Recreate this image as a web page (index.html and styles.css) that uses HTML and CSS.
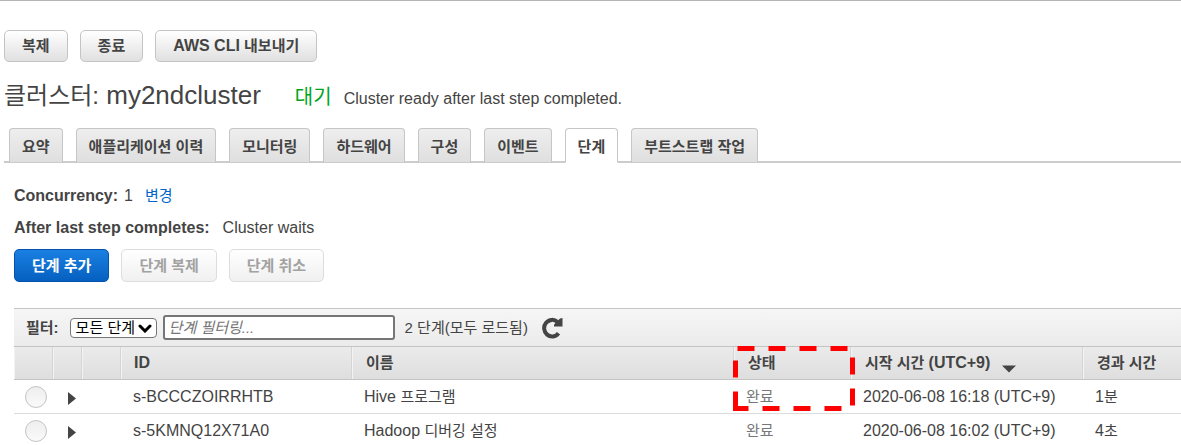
FILE: index.html
```
<!DOCTYPE html>
<html lang="ko">
<head>
<meta charset="utf-8">
<title>클러스터: my2ndcluster</title>
<link rel="stylesheet" href="styles.css">
</head>
<body>
<main class="page">
  <div class="actions">
    <button class="btn" type="button">복제</button>
    <button class="btn" type="button">종료</button>
    <button class="btn" type="button"><span class="latin">AWS CLI</span> 내보내기</button>
  </div>

  <header class="heading">
    <h1 class="title"><span class="title-label">클러스터:</span> my2ndcluster</h1>
    <span class="state">대기</span>
    <span class="state-note">Cluster ready after last step completed.</span>
  </header>

  <nav class="tabs">
    <button class="tab" type="button">요약</button>
    <button class="tab" type="button">애플리케이션 이력</button>
    <button class="tab" type="button">모니터링</button>
    <button class="tab" type="button">하드웨어</button>
    <button class="tab" type="button">구성</button>
    <button class="tab" type="button">이벤트</button>
    <button class="tab tab-active" type="button">단계</button>
    <button class="tab" type="button">부트스트랩 작업</button>
  </nav>

  <section class="panel">
    <div class="setting"><strong>Concurrency:</strong><span>1</span><a class="link ko" href="#">변경</a></div>
    <div class="setting setting-wide"><strong>After last step completes:</strong><span>Cluster waits</span></div>
    <div class="step-actions">
      <button class="btn btn-primary" type="button">단계 추가</button>
      <button class="btn" type="button" disabled>단계 복제</button>
      <button class="btn" type="button" disabled>단계 취소</button>
    </div>

    <div class="steps">
      <div class="filter">
        <label class="filter-label" for="kind">필터:</label>
        <span class="select-wrap">
          <select class="select" id="kind"><option>모든 단계</option></select>
          <svg class="chevron" width="14" height="9" viewBox="0 0 14 9"><path d="M2 2l5 5 5-5" fill="none" stroke="#000" stroke-width="3" stroke-linecap="round"/></svg>
        </span>
        <input class="search" type="text" placeholder="단계 필터링..." aria-label="단계 필터링">
        <span class="count">2 단계(모두 로드됨)</span>
        <button class="refresh" type="button" aria-label="새로 고침">
          <svg width="22" height="22" viewBox="0 0 22 22"><path d="M16.500 16.200A8 8.300 0 1 1 15.500 5" fill="none" stroke="#444" stroke-width="4"/><path d="M20.500 1v8.500h-8.500v-2l6-6z" fill="#444"/></svg>
        </button>
      </div>
      <div class="table-wrap">
        <table class="table">
          <colgroup>
            <col class="c-pick"><col class="c-open"><col class="c-gap"><col class="c-id"><col class="c-name"><col class="c-state"><col class="c-start"><col>
          </colgroup>
          <thead>
            <tr><th></th><th></th><th></th><th class="latin">ID</th><th>이름</th><th>상태</th><th><span class="sort"><span>시작 시간 <span class="latin">(UTC+9)</span></span><svg width="14" height="8" viewBox="0 0 14 8"><path d="M0 0.500h14l-7 7z" fill="#444"/></svg></span></th><th>경과 시간</th></tr>
          </thead>
          <tbody>
            <tr>
              <td class="pick"><input class="radio" type="radio" name="step" aria-label="s-BCCCZOIRRHTB"></td>
              <td><button class="open" type="button" aria-label="펼치기"><svg width="8" height="13" viewBox="0 0 8 13"><path d="M0 0l8 6.500-8 6.500z" fill="#444"/></svg></button></td>
              <td></td><td>s-BCCCZOIRRHTB</td><td>Hive <span class="ko">프로그램</span></td><td class="done ko">완료</td><td>2020-06-08 16:18 (UTC+9)</td><td>1<span class="ko">분</span></td>
            </tr>
            <tr>
              <td class="pick"><input class="radio" type="radio" name="step" aria-label="s-5KMNQ12X71A0"></td>
              <td><button class="open" type="button" aria-label="펼치기"><svg width="8" height="13" viewBox="0 0 8 13"><path d="M0 0l8 6.500-8 6.500z" fill="#444"/></svg></button></td>
              <td></td><td>s-5KMNQ12X71A0</td><td>Hadoop <span class="ko">디버깅 설정</span></td><td class="done ko">완료</td><td>2020-06-08 16:02 (UTC+9)</td><td>4<span class="ko">초</span></td>
            </tr>
          </tbody>
        </table>
        <svg class="marker" width="122" height="66" viewBox="0 0 122 66"><path d="M2.500 62.500v-60h117v60z" fill="none" stroke="#f00" stroke-width="5" stroke-dasharray="17 14"/></svg>
      </div>
    </div>
  </section>
</main>
</body>
</html>
```
FILE: styles.css
```
* { box-sizing: border-box; }
body {
  margin: 0;
  background: #fff;
  color: #444;
  font: 16px/20px "Liberation Sans", "Noto Sans CJK KR", sans-serif;
  overflow-x: hidden;
}
button, input, select { font: inherit; color: inherit; }
.page { border-top: 1px solid #b5b5b5; padding-top: 29px; }
.ko { font-size: 15px; }
.latin { font-size: 16px; }

.actions { display: flex; gap: 12px; padding-left: 4px; }
.btn {
  height: 32px;
  padding: 0 16px;
  border: 1px solid #c4c4c4;
  border-radius: 5px;
  background: linear-gradient(#fff, #e0e0e0);
  font-size: 15px;
  font-weight: bold;
  white-space: nowrap;
}
.btn:disabled { border-color: #ddd; background: linear-gradient(#fff, #f0f0f0); color: #a2a2a2; }
.btn-primary { border-color: #0552ad; background: linear-gradient(#1a80e2, #0560c0); color: #fff; }
.actions .btn, .step-actions .btn { padding: 0 17px; }

.heading { display: flex; align-items: baseline; height: 50px; padding: 17px 4px 0; white-space: nowrap; }
.title { margin: 0 34px 0 0; font-size: 26px; line-height: 32px; font-weight: normal; }
.title-label { font-size: 24px; }
.state { margin-right: 12px; color: #00a51c; font-size: 20px; }

.tabs { display: flex; gap: 13px; margin-left: 4px; padding: 16px 5px 0; border-bottom: 2px solid #ccc; }
.tab {
  height: 35px;
  margin-bottom: -2px;
  padding: 2px 12px 0;
  border: 1px solid #c6c6c6;
  border-bottom-color: #ccc;
  border-radius: 4px 4px 0 0;
  background: linear-gradient(#eee, #dfdfdf);
  font-size: 15px;
  font-weight: bold;
  white-space: nowrap;
}
.tab-active { border-bottom-color: #fff; background: #fff; }

.panel { padding: 23px 0 0 14px; }
.setting { display: flex; gap: 6px; height: 32px; align-items: baseline; }
.setting-wide { gap: 13px; height: 31px; }
.link { margin-left: 6px; color: #0066cc; text-decoration: none; }
.step-actions { display: flex; gap: 12px; }
.step-actions .btn { height: 33px; }

.steps { margin-top: 26px; border-top: 1px solid #c4c4c4; }
.filter {
  display: flex;
  align-items: center;
  height: 37px;
  padding-left: 12px;
  background: linear-gradient(#f6f6f6, #ebebeb);
  font-size: 15px;
}
.filter-label { margin-right: 11px; font-weight: bold; }
.select-wrap { position: relative; margin-right: 6px; }
.select {
  display: block;
  width: 87px;
  height: 20px;
  padding: 0 5px;
  border: 1px solid #767676;
  border-radius: 4px;
  background: #fff;
  color: #000;
  line-height: 18px;
  appearance: none;
}
.chevron { position: absolute; right: 5px; top: 6px; pointer-events: none; }
.search { width: 232px; height: 25px; margin-right: 10px; padding: 0 4px; border: 2px solid #767676; border-radius: 3px; background: #fff; }
.search::placeholder { color: #757575; font-style: italic; }
.refresh { display: flex; margin-left: 14px; padding: 0; border: 0; background: none; }

.table-wrap { position: relative; }
.table { width: 100%; table-layout: fixed; border-collapse: separate; border-spacing: 0; }
.c-pick { width: 39px; }
.c-open { width: 29px; }
.c-gap { width: 39px; }
.c-id { width: 231px; }
.c-name { width: 382px; }
.c-state { width: 117px; }
.c-start { width: 232px; }
.table th {
  height: 34px;
  padding: 0 0 0 14px;
  border: 0 solid #c4c4c4;
  border-width: 1px 0;
  background: linear-gradient(#ebebeb, #dedede);
  box-shadow: inset 1px 0 #f3f3f3, inset -1px 0 #d5d5d5;
  font-size: 15px;
  text-align: left;
  white-space: nowrap;
}
.table th.latin { font-size: 16px; padding-left: 13px; }
.table th:last-child { box-shadow: inset 1px 0 #f3f3f3; }
.table td { height: 34px; padding: 0 0 0 12px; border-bottom: 1px solid #ddd; white-space: nowrap; }
.table .pick { padding-left: 11px; }
.table .done { color: #777; }
.sort { display: flex; align-items: center; gap: 12px; }
.sort svg { margin-top: 12px; }
.radio {
  display: block;
  width: 22px;
  height: 22px;
  margin: 0;
  border: 1px solid #c4c4c4;
  border-radius: 50%;
  background: linear-gradient(#eee, #fafafa);
  appearance: none;
}
.open { display: flex; margin: 3px 0 0 3px; padding: 0; border: 0; background: none; }
.marker { position: absolute; left: 719px; top: 0; pointer-events: none; }
@media (max-height: 460px) {
  body { height: 100vh; overflow-y: hidden; }
}
```
